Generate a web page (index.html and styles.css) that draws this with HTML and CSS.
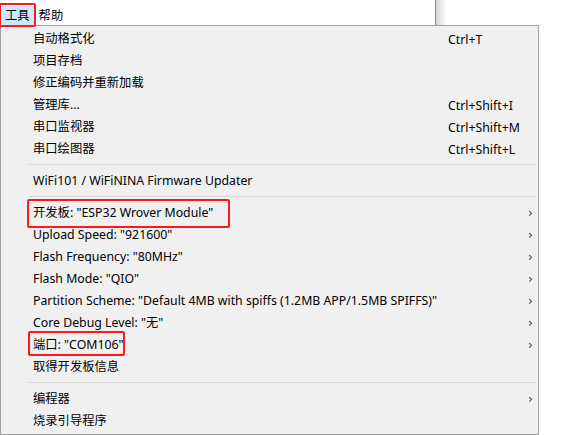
FILE: index.html
```html
<!DOCTYPE html>
<html lang="zh-CN">
<head>
<meta charset="utf-8">
<link rel="stylesheet" href="styles.css">
</head>
<body>
<div class="page">
  <div class="menubar">
    <span class="top-item active mark">工具</span>
    <span class="top-item">帮助</span>
  </div>
  <div class="dropdown">
    <div class="row"><span class="label">自动格式化</span><span class="key">Ctrl+T</span><span class="arrow"></span></div>
    <div class="row"><span class="label">项目存档</span><span class="key"></span><span class="arrow"></span></div>
    <div class="row"><span class="label">修正编码并重新加载</span><span class="key"></span><span class="arrow"></span></div>
    <div class="row"><span class="label">管理库...</span><span class="key">Ctrl+Shift+I</span><span class="arrow"></span></div>
    <div class="row"><span class="label">串口监视器</span><span class="key">Ctrl+Shift+M</span><span class="arrow"></span></div>
    <div class="row"><span class="label">串口绘图器</span><span class="key">Ctrl+Shift+L</span><span class="arrow"></span></div>
    <div class="sep"></div>
    <div class="row"><span class="label">WiFi101 / WiFiNINA Firmware Updater</span><span class="key"></span><span class="arrow"></span></div>
    <div class="sep"></div>
    <div class="row"><span class="label mark box-board">开发板: "ESP32 Wrover Module"</span><span class="key"></span><span class="arrow">›</span></div>
    <div class="row"><span class="label">Upload Speed: "921600"</span><span class="key"></span><span class="arrow">›</span></div>
    <div class="row"><span class="label">Flash Frequency: "80MHz"</span><span class="key"></span><span class="arrow">›</span></div>
    <div class="row"><span class="label">Flash Mode: "QIO"</span><span class="key"></span><span class="arrow">›</span></div>
    <div class="row"><span class="label">Partition Scheme: "Default 4MB with spiffs (1.2MB APP/1.5MB SPIFFS)"</span><span class="key"></span><span class="arrow">›</span></div>
    <div class="row"><span class="label">Core Debug Level: "无"</span><span class="key"></span><span class="arrow">›</span></div>
    <div class="row"><span class="label mark box-port">端口: "COM106"</span><span class="key"></span><span class="arrow">›</span></div>
    <div class="row"><span class="label">取得开发板信息</span><span class="key"></span><span class="arrow"></span></div>
    <div class="sep"></div>
    <div class="row"><span class="label">编程器</span><span class="key"></span><span class="arrow">›</span></div>
    <div class="row"><span class="label">烧录引导程序</span><span class="key"></span><span class="arrow"></span></div>
  </div>
</div>
</body>
</html>
```
FILE: styles.css
```css
html, body {
  margin: 0;
  padding: 0;
  background: #ffffff;
}
body {
  font-family: "Noto Sans", "Noto Sans CJK SC", sans-serif;
  font-size: 12.3px;
  color: #000;
  width: 563px;
  height: 435px;
  overflow: hidden;
}
.page {
  display: flex;
  flex-direction: column;
}
.menubar {
  position: relative;
  width: 436px;
  height: 25px;
  border-right: 1px solid #8c8c8c;
  display: flex;
  align-items: flex-end;
  padding-left: 2px;
  box-sizing: border-box;
  background: #fff;
}
.menubar::after {
  content: "";
  position: absolute;
  top: 0;
  right: -12px;
  width: 11px;
  height: 25px;
  background: linear-gradient(to right, #d4d4d4, #ffffff);
}
.top-item {
  height: 19px;
  line-height: 19px;
  padding: 0 4px 0 3px;
  box-sizing: border-box;
}
.top-item.active {
  background: #cce8ff;
  margin-right: 2px;
}
.mark {
  position: relative;
}
.mark::after {
  content: "";
  position: absolute;
  border: 2.5px solid #ff1a1a;
  border-radius: 2px;
  pointer-events: none;
}
.top-item.mark::after {
  left: -3px;
  top: -3px;
  right: -2px;
  bottom: -2px;
}
.dropdown {
  width: 539px;
  height: 410px;
  box-sizing: border-box;
  border: 1px solid #a0a0a0;
  background: #f0f0f0;
  padding: 1px 0 2px 0;
  display: flex;
  flex-direction: column;
}
.row {
  height: 22px;
  box-sizing: border-box;
  padding-top: 2px;
  display: grid;
  grid-template-columns: 1fr 80px 8px;
  align-items: center;
  padding-left: 32px;
  padding-right: 2px;
}
.label {
  white-space: nowrap;
  line-height: 16px;
}
.key {
  white-space: nowrap;
}
.arrow {
  font-family: "DejaVu Sans", sans-serif;
  font-size: 12px;
  color: #333;
  text-align: left;
}
.sep {
  height: 10px;
  display: flex;
  align-items: center;
  padding-left: 28px;
  padding-right: 3px;
}
.sep::before {
  content: "";
  display: block;
  flex: 1;
  height: 1px;
  background: #d7d7d7;
}
.box-board {
  justify-self: start;
}
.box-board::after {
  left: -6px;
  top: -6px;
  width: 199px;
  height: 25px;
}
.box-port {
  justify-self: start;
}
.box-port::after {
  left: -5px;
  top: -6px;
  width: 93px;
  height: 21px;
}
```
